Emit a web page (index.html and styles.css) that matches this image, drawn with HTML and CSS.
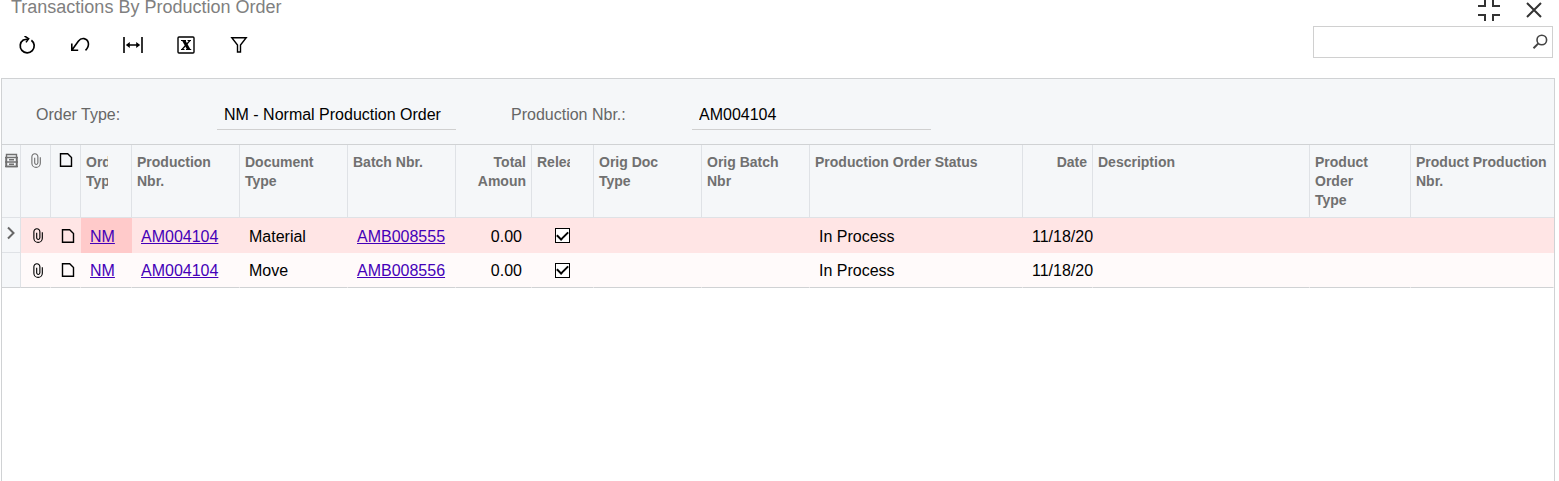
FILE: index.html
```html
<!DOCTYPE html>
<html lang="en">
<head>
	<meta charset="UTF-8">
	<title>Transactions By Production Order</title>
	<link rel="stylesheet" href="styles.css">
</head>
<body>
	<svg class="defs" aria-hidden="true">
		<symbol id="clip" viewBox="0 0 12 16">
			<path d="M4.600 5v5.500a1.700 1.700 0 0 0 3.400 0V4a3.200 3.200 0 0 0-6.400 0v6.800a4.500 4.500 0 0 0 9 0V4.500" fill="none" stroke="currentColor" stroke-width="1.200"/>
		</symbol>
		<symbol id="note" viewBox="0 0 14 14">
			<path d="M1.500 .8h7.200l3.800 3.800v8.600h-11z" fill="none" stroke="currentColor" stroke-width="1.400"/>
		</symbol>
	</svg>

	<header class="title-bar">
		<h1>Transactions By Production Order</h1>
		<button class="win-btn" aria-label="Restore">
			<svg width="22" height="22" viewBox="0 0 22 22" fill="none" stroke="#333" stroke-width="2"><path d="M0 6h7V0M15 0v6h7M0 15h7v6M15 21v-6h7"/></svg>
		</button>
		<button class="win-btn" aria-label="Close">
			<svg width="22" height="22" viewBox="0 0 22 22" fill="none" stroke="#333" stroke-width="2"><path d="M4 3l14 14M18 3L4 17"/></svg>
		</button>
	</header>

	<div class="toolbar">
		<button class="tool" aria-label="Refresh">
			<svg width="18" height="18" viewBox="0 0 18 18"><path d="M13.400 4.200A7 7 0 1 1 5.300 4L10 3" fill="none" stroke="#000" stroke-width="1.700"/><path d="M6.500 0l4.200 2.600-2.700 3.800" fill="none" stroke="#000" stroke-width="1.500"/></svg>
		</button>
		<button class="tool" aria-label="Undo">
			<svg width="20" height="18" viewBox="0 0 20 18" fill="none" stroke="#000" stroke-width="1.600"><path d="M2 14L8.300 5.300C10 3 12 2.300 14 2.600c5 1 6.200 7.400 1.500 11.800M1.800 7.500V14.200h6.400"/></svg>
		</button>
		<button class="tool" aria-label="Fit columns">
			<svg width="20" height="18" viewBox="0 0 20 18"><path d="M1 1v16M19 1v16M4 9h12" fill="none" stroke="#000" stroke-width="1.600"/><path d="M2.800 9l4-3v6zM17.200 9l-4-3v6z"/></svg>
		</button>
		<button class="tool" aria-label="Export to Excel">
			<svg width="18" height="18" viewBox="0 0 18 18"><rect x="1" y="1" width="16" height="16" rx="1" fill="none" stroke="#000" stroke-width="1.400"/><path d="M4 4.500h5M10.500 4.500H14M4 13.500h3.500M9 13.500h5.200M13 4.500l-8 9" fill="none" stroke="#000" stroke-width="1.200"/><path d="M5 4.500h3.500l5 9H10z"/></svg>
		</button>
		<button class="tool" aria-label="Filter">
			<svg width="18" height="18" viewBox="0 0 18 18" fill="none" stroke="#000" stroke-width="1.400"><path d="M1.800 1.800h14.400L10.500 9v7h-3V9z"/></svg>
		</button>
		<form class="search">
			<input type="text" aria-label="Search">
			<button type="button" aria-label="Find">
				<svg width="16" height="16" viewBox="0 0 16 16" fill="none" stroke="#444"><circle cx="9.800" cy="6" r="4.800" stroke-width="1.600"/><path d="M6.400 9.400L1.500 14.300" stroke-width="2"/></svg>
			</button>
		</form>
	</div>

	<main class="panel">
		<form class="params">
			<label for="orderType">Order Type:</label>
			<input id="orderType" type="text" value="NM - Normal Production Order" readonly>
			<label class="second" for="prodNbr">Production Nbr.:</label>
			<input id="prodNbr" type="text" value="AM004104" readonly>
		</form>

		<table class="grid">
			<colgroup>
				<col class="c-sel">
				<col class="c-icon">
				<col class="c-icon">
				<col class="c-type">
				<col class="c-std">
				<col class="c-std">
				<col class="c-std">
				<col class="c-total">
				<col class="c-rel">
				<col class="c-std">
				<col class="c-std">
				<col class="c-status">
				<col class="c-date">
				<col>
				<col class="c-ptype">
				<col class="c-pnbr">
			</colgroup>
			<thead>
				<tr>
					<th class="icon">
						<svg width="13" height="15" viewBox="0 0 13 15" fill="none" stroke="#707070"><path d="M1.500 1.500h10v12h-10z" stroke-width="1.400"/><path d="M0 4.500h13M0 9h13M1 4v10M12 4v10M0 13.500h13" stroke-width="1.400"/><path d="M4 6.800h5M4 11.300h5" stroke-width="1.400"/></svg>
					</th>
					<th class="icon"><svg class="clip"><use href="#clip"/></svg></th>
					<th class="icon dark"><svg class="note"><use href="#note"/></svg></th>
					<th><div class="cut">Order Type</div></th>
					<th>Production Nbr.</th>
					<th>Document Type</th>
					<th>Batch Nbr.</th>
					<th class="num">Total Amoun</th>
					<th><div class="cut">Released</div></th>
					<th>Orig Doc Type</th>
					<th>Orig Batch Nbr</th>
					<th>Production Order Status</th>
					<th class="num">Date</th>
					<th>Description</th>
					<th>Product Order Type</th>
					<th>Product Production Nbr.</th>
				</tr>
			</thead>
			<tbody>
				<tr class="active">
					<td class="sel"><svg width="10" height="14" viewBox="0 0 10 14" fill="none" stroke="#666" stroke-width="2"><path d="M2 1.500L7.500 7 2 12.500"/></svg></td>
					<td class="icon"><svg class="clip"><use href="#clip"/></svg></td>
					<td class="icon"><svg class="note"><use href="#note"/></svg></td>
					<td class="current"><a href="#">NM</a></td>
					<td><a href="#">AM004104</a></td>
					<td>Material</td>
					<td><a href="#">AMB008555</a></td>
					<td class="num">0.00</td>
					<td class="check"><input type="checkbox" aria-label="Released" checked></td>
					<td></td>
					<td></td>
					<td>In Process</td>
					<td class="date">11/18/20</td>
					<td></td>
					<td></td>
					<td></td>
				</tr>
				<tr>
					<td class="sel"></td>
					<td class="icon"><svg class="clip"><use href="#clip"/></svg></td>
					<td class="icon"><svg class="note"><use href="#note"/></svg></td>
					<td><a href="#">NM</a></td>
					<td><a href="#">AM004104</a></td>
					<td>Move</td>
					<td><a href="#">AMB008556</a></td>
					<td class="num">0.00</td>
					<td class="check"><input type="checkbox" aria-label="Released" checked></td>
					<td></td>
					<td></td>
					<td>In Process</td>
					<td class="date">11/18/20</td>
					<td></td>
					<td></td>
					<td></td>
				</tr>
			</tbody>
		</table>
	</main>
</body>
</html>
```
FILE: styles.css
```css
*{
	box-sizing: border-box;
}
body{
	margin: 0;
	min-height: 100vh;
	display: flex;
	flex-direction: column;
	background: #fff;
	color: #000;
	font: 16px "Liberation Sans", Arial, sans-serif;
}
button{
	padding: 0;
	border: 0;
	background: none;
	cursor: pointer;
}
input{
	font: inherit;
	outline: none;
}
svg{
	display: block;
}
.defs{
	position: absolute;
	width: 0;
	height: 0;
}

/* title */
.title-bar{
	display: flex;
	align-items: flex-start;
	height: 22px;
	padding: 0 14px 0 11px;
}
.title-bar h1{
	flex: 1;
	margin: 0;
	font-size: 18px;
	font-weight: normal;
	line-height: 14px;
	color: #808080;
}
.win-btn{
	margin-left: 23px;
}

/* toolbar */
.toolbar{
	display: flex;
	align-items: flex-end;
	padding: 4px 6px 0 0;
	margin-bottom: 20px;
}
.tool{
	display: flex;
	align-items: center;
	justify-content: center;
	width: 53px;
	height: 26px;
}
.search{
	display: flex;
	align-items: center;
	width: 240px;
	height: 32px;
	margin-left: auto;
	border: 1px solid #d0d0d0;
}
.search input{
	flex: 1;
	min-width: 0;
	height: 30px;
	padding: 0 6px;
	border: 0;
}
.search button{
	padding: 0 4px;
}

/* parameters */
.panel{
	flex: 1;
	margin: 0 4px 0 1px;
	border: 1px solid #d0d2d4;
	border-bottom: 0;
}
.params{
	display: flex;
	align-items: center;
	padding: 21px 34px 14px;
	background: #f5f7f9;
	border-bottom: 1px solid #d0d2d4;
}
.params label{
	width: 181px;
	color: #666;
}
.params .second{
	margin-left: 55px;
}
.params input{
	width: 239px;
	height: 30px;
	padding: 0 7px;
	border: 0;
	border-bottom: 1px solid #d0d0d0;
	background: none;
}

/* grid */
.grid{
	width: 100%;
	table-layout: fixed;
	border-spacing: 0;
}
.c-sel{ width: 19px; }
.c-icon{ width: 30px; }
.c-type{ width: 51px; }
.c-std{ width: 108px; }
.c-total{ width: 76px; }
.c-rel{ width: 62px; }
.c-status{ width: 213px; }
.c-date{ width: 70px; }
.c-ptype{ width: 101px; }
.c-pnbr{ width: 143px; }
.grid th{
	height: 73px;
	padding: 8px 23px 0 5px;
	border-right: 1px solid #dfe2e6;
	border-bottom: 1px solid #dfe2e6;
	background: #f5f7f9;
	color: #707070;
	font-size: 14px;
	line-height: 19px;
	text-align: left;
	vertical-align: top;
}
.grid th:last-child{
	padding-right: 0;
	border-right: 0;
}
.grid th.num{
	padding-right: 5px;
	text-align: right;
}
.grid th.icon{
	padding: 8px 0 0;
}
.grid th.dark{
	color: #000;
}
.cut{
	overflow: hidden;
}
.grid td{
	height: 35px;
	padding: 2px 9px 0;
	border-right: 1px solid transparent;
	background: #fffafa;
	white-space: nowrap;
}
.grid tr:last-child td{
	border-bottom: 1px solid #d0d2d4;
}
.grid .active td{
	background: #ffe5e5;
}
.grid .active .current{
	background: #ffcaca;
}
.grid .active .sel, .grid .sel{
	padding: 0 0 4px;
	background: #f5f7f9;
	border-right-color: #dfe2e6;
	border-bottom: 1px solid #dfe2e6;
}
.grid td.icon{
	padding: 0 0 0 4px;
}
.grid td.check{
	padding: 0;
}
.grid td.num{
	text-align: right;
}
.grid td.date{
	padding-right: 0;
}
.grid a{
	color: #4400b8;
}
.icon svg, .sel svg{
	margin: 0 auto;
}
.clip{
	width: 12px;
	height: 15px;
}
.note{
	width: 14px;
	height: 14px;
}
.check input{
	appearance: none;
	display: grid;
	place-content: center;
	width: 15px;
	height: 15px;
	margin: 0 auto;
	border: 1px solid #000;
	background: #fff;
}
.check input:checked::after{
	content: "";
	width: 9px;
	height: 5px;
	margin-bottom: 3px;
	border: solid #000;
	border-width: 0 0 2px 2px;
	transform: rotate(-45deg);
}
```
